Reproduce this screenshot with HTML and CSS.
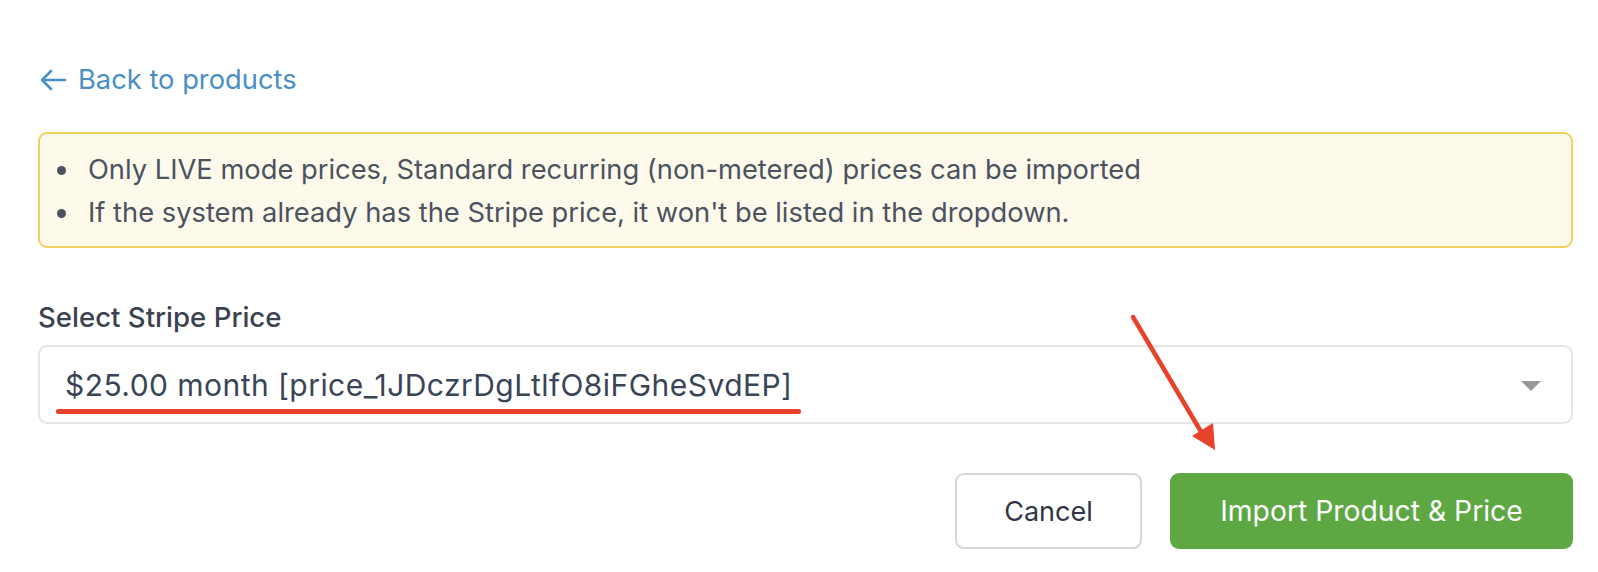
FILE: index.html
```html
<!DOCTYPE html>
<html>
<head>
<meta charset="utf-8">
<link rel="stylesheet" href="styles.css">
</head>
<body>
<div class="page">
  <a class="back" href="#">
    <svg class="back-icon" width="28" height="24" viewBox="0 0 28 24" fill="none" stroke="currentColor" stroke-width="2.6" stroke-linecap="round" stroke-linejoin="round"><path d="M26 12H3M12 3L3 12l9 9"/></svg>
    <span>Back to products</span>
  </a>

  <div class="notice">
    <ul>
      <li>Only LIVE mode prices, Standard recurring (non-metered) prices can be imported</li>
      <li>If the system already has the Stripe price, it won't be listed in the dropdown.</li>
    </ul>
  </div>

  <div class="field">
    <label class="label">Select Stripe Price</label>
    <div class="select">
      <span class="select-value">$25.00 month [price_1JDczrDgLtlfO8iFGheSvdEP]</span>
      <span class="caret"></span>
      <span class="underline"></span>
    </div>
  </div>

  <div class="actions">
    <button class="btn btn-cancel">Cancel</button>
    <button class="btn btn-primary">Import Product &amp; Price</button>
  </div>

  <svg class="annot-arrow" width="100" height="150" viewBox="0 0 100 150">
    <line x1="6" y1="6" x2="76" y2="124" stroke="#e8432a" stroke-width="4.5" stroke-linecap="round"/>
    <polygon points="88,139 65,125 86,112" fill="#e8432a"/>
  </svg>
</div>
</body>
</html>
```
FILE: styles.css
```css
html, body {
  margin: 0;
  padding: 0;
  background: #ffffff;
}
body {
  font-family: Inter, "Noto Sans", "Liberation Sans", sans-serif;
  color: #4b5260;
}
.page {
  position: relative;
  padding: 60px 25px 0 38px;
}
.back {
  display: inline-flex;
  align-items: center;
  gap: 11px;
  color: #4a8ec4;
  text-decoration: none;
  font-size: 27.3px;
  line-height: 40px;
  height: 40px;
}
.back-icon {
  display: block;
  margin-left: 1px;
}
.notice {
  margin-top: 32px;
  background: #fefaeb;
  border: 2px solid #f4d05e;
  border-radius: 9px;
  padding: 14px 20px 12px 17px;
}
.notice ul {
  margin: 0;
  padding: 0;
  list-style: none;
  font-size: 27.3px;
  line-height: 43px;
  color: #4b5260;
}
.notice li {
  display: flex;
  align-items: center;
}
.notice li::before {
  content: "";
  flex: none;
  width: 9px;
  height: 9px;
  border-radius: 50%;
  background: #4b5260;
  margin: 2px 22px 0 0;
}
.field {
  margin-top: 50px;
}
.label {
  display: block;
  font-size: 27.6px;
  line-height: 38px;
  color: #3b4250;
  font-weight: 500;
}
.select {
  position: relative;
  margin-top: 9px;
  height: 75px;
  border: 2px solid #e6e6e6;
  border-radius: 9px;
  display: flex;
  align-items: center;
  padding: 0 30px 0 25px;
}
.select-value {
  flex: 1;
  font-size: 30px;
  letter-spacing: 0.45px;
  color: #394556;
  white-space: nowrap;
}
.caret {
  width: 0;
  height: 0;
  border-left: 10px solid transparent;
  border-right: 10px solid transparent;
  border-top: 10px solid #999999;
  margin-top: 2px;
}
.underline {
  position: absolute;
  left: 16px;
  top: 62px;
  width: 745px;
  height: 5px;
  background: #e8432a;
  border-radius: 2px;
}
.actions {
  margin-top: 49px;
  display: flex;
  justify-content: flex-end;
  gap: 28px;
}
.btn {
  font-family: Inter, "Noto Sans", "Liberation Sans", sans-serif;
  font-size: 27px;
  height: 76px;
  border-radius: 9px;
  cursor: pointer;
}
.btn-cancel {
  width: 187px;
  background: #ffffff;
  border: 2px solid #d3d6dc;
  color: #2f3644;
  box-shadow: 0 1px 2px rgba(0,0,0,0.06);
}
.btn-primary {
  width: 403px;
  background: #5da843;
  border: none;
  color: #ffffff;
  font-size: 28.3px;
}
.annot-arrow {
  position: absolute;
  left: 1127px;
  top: 311px;
  overflow: visible;
}
```
